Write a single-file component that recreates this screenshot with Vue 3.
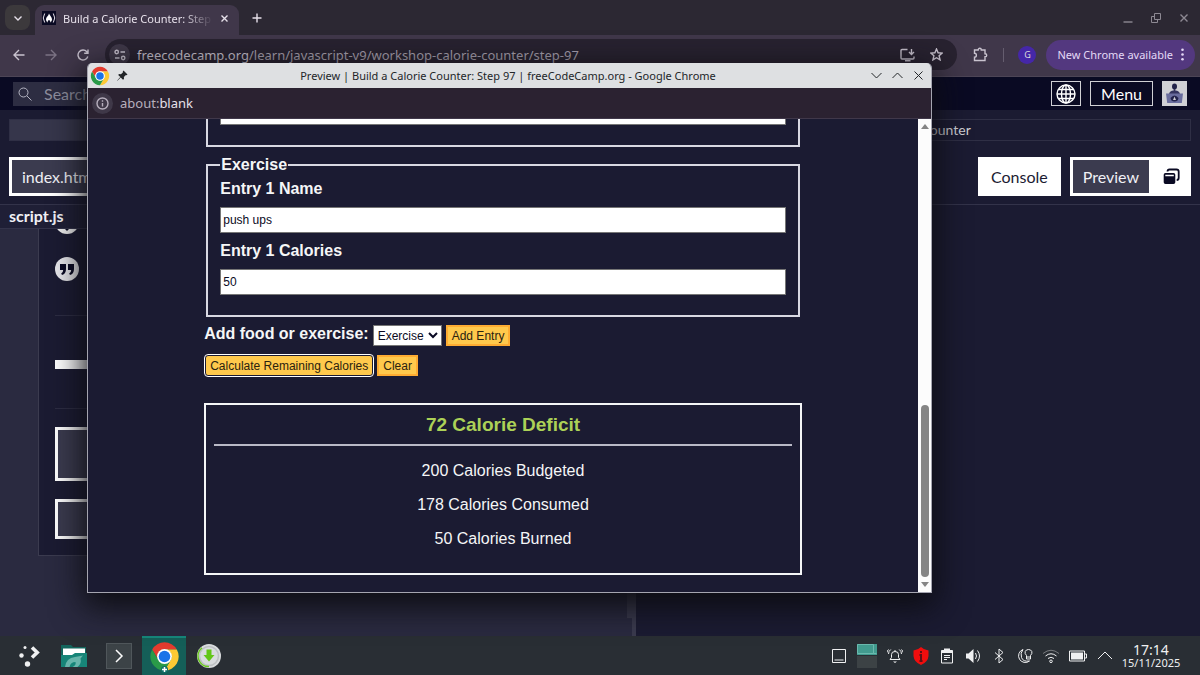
<template>
  <div class="desktop">
    <svg class="defs" aria-hidden="true">
      <symbol id="chrome-logo" viewBox="0 0 48 48">
        <path fill="#e33b2e" d="M24 13H43.05A22 22 0 0 0 4.95 13L14.47 29.5A11 11 0 0 1 24 13z" />
        <path fill="#fcc934" d="M43.05 13A22 22 0 0 1 24 46L33.53 29.5A11 11 0 0 0 24 13z" />
        <path fill="#2a9a48" d="M4.95 13A22 22 0 0 0 24 46L33.53 29.5A11 11 0 0 1 14.47 29.5z" />
        <circle cx="24" cy="24" r="11.5" fill="#fff" />
        <circle cx="24" cy="24" r="9" fill="#1a73e8" />
      </symbol>
    </svg>

    <!-- main browser window -->
    <main class="browser">
      <header class="tabstrip">
        <button class="tab-search" aria-label="Search tabs">
          <svg width="10" height="10" viewBox="0 0 10 10"><path class="line bold" d="M1.5 3.5L5 7l3.500-3.500" /></svg>
        </button>
        <div class="tab">
          <svg class="favicon" width="14" height="14" viewBox="0 0 14 14">
            <rect width="14" height="14" fill="#0a0a23" />
            <path class="line" d="M2.700 2.500Q-.2 7 2.700 11.500M11.300 2.500Q14.200 7 11.300 11.500" />
            <path fill="#fff" d="M7 2.500c.5 1.800 3 3.500 3 5.800 0 1.500-.8 2.600-2 3.200.7-1.200.2-2-1-2.600-1.200.6-1.700 1.400-1 2.600-1.200-.6-2-1.700-2-3.200C4 6 6.500 5 7 2.500z" />
          </svg>
          <span class="tab-title">Build a Calorie Counter: Step 97</span>
          <button class="plain" aria-label="Close tab">
            <svg width="9" height="9" viewBox="0 0 9 9"><path class="line bold" d="M1.500 1.500l6 6m0-6l-6 6" /></svg>
          </button>
        </div>
        <button class="plain new-tab" aria-label="New tab">
          <svg width="10" height="10" viewBox="0 0 10 10"><path class="line bold" d="M5 .5v9M.5 5h9" /></svg>
        </button>
        <div class="window-buttons">
          <button class="plain" aria-label="Minimize">
            <svg width="10" height="10" viewBox="0 0 10 10"><path class="line bold" d="M.5 9h9" /></svg>
          </button>
          <button class="plain" aria-label="Restore">
            <svg width="10" height="10" viewBox="0 0 10 10"><path class="line" d="M3.500.5h6v6h-6zM3.500 3.500h-3v6h6v-3" /></svg>
          </button>
          <button class="plain" aria-label="Close">
            <svg width="10" height="10" viewBox="0 0 10 10"><path class="line bold" d="M1.500 1.500l7 7m0-7l-7 7" /></svg>
          </button>
        </div>
      </header>

      <div class="toolbar">
        <button class="plain" aria-label="Back">
          <svg width="12" height="12" viewBox="0 0 12 12"><path class="line bold" d="M11.500 6H1M6 1L1 6l5 5" /></svg>
        </button>
        <button class="plain dim" aria-label="Forward">
          <svg width="12" height="12" viewBox="0 0 12 12"><path class="line bold" d="M.5 6H11M6 1l5 5-5 5" /></svg>
        </button>
        <button class="plain" aria-label="Reload">
          <svg width="12" height="12" viewBox="0 0 12 12"><path class="line bold" d="M10.800 7.500A5 5 0 1 1 9.800 2.700L11 4M11 .5V4.300H7.200" /></svg>
        </button>
        <div class="address">
          <span class="site-info">
            <svg width="12" height="12" viewBox="0 0 12 12"><path class="line bold" d="M6.500 3H11M1 9h4.500" /><circle class="line bold" cx="2.700" cy="3" r="1.700" /><circle class="line bold" cx="9.200" cy="9" r="1.700" /></svg>
          </span>
          <span class="url">freecodecamp.org<span>/learn/javascript-v9/workshop-calorie-counter/step-97</span></span>
          <button class="plain" aria-label="Install app">
            <svg width="15" height="14" viewBox="0 0 15 14"><path class="line bold" d="M7.500 1.500H2A1 1 0 0 0 1 2.500v7.500a1 1 0 0 0 1 1H13a1 1 0 0 0 1-1V8.500M5 12.700h5.500M11.500 1v5M9 4l2.500 2.500L14 4" /></svg>
          </button>
          <button class="plain" aria-label="Bookmark">
            <svg width="13" height="13" viewBox="0 0 13 13"><path class="line bold" d="M6.500 1l1.600 3.800 4.100.3-3.100 2.700 1 4.100-3.600-2.200-3.600 2.200 1-4.100L.8 5.100l4.100-.3z" /></svg>
          </button>
        </div>
        <button class="plain" aria-label="Extensions">
          <svg width="15" height="15" viewBox="0 0 15 15"><path class="line bold" d="M1.500 3H5.200C5.200.7 8.300.7 8.300 3H12V6.700c2.300 0 2.300 3.100 0 3.100v3.700H1.500V10.300C4 10.300 4 6.200 1.500 6.200z" /></svg>
        </button>
        <span class="divider"></span>
        <span class="profile">G</span>
        <button class="update">New Chrome available
          <svg width="3" height="13" viewBox="0 0 3 13"><circle cx="1.500" cy="1.800" r="1.300" /><circle cx="1.500" cy="6.500" r="1.300" /><circle cx="1.500" cy="11.200" r="1.300" /></svg>
        </button>
      </div>

      <nav class="site-nav">
        <label class="search">
          <svg width="14" height="14" viewBox="0 0 14 14"><circle class="line" cx="5.500" cy="5.500" r="4.500" /><path class="line" d="M9 9l4.500 4.500" /></svg>
          <input type="search" placeholder="Search" aria-label="Search tutorials">
        </label>
        <button class="nav-button" aria-label="Language">
          <svg width="20" height="20" viewBox="0 0 20 20"><g class="line bold"><circle cx="10" cy="10" r="9" /><ellipse cx="10" cy="10" rx="4.500" ry="9" /><path d="M10 1v18M1 10h18M2.500 5.500h15M2.500 14.500h15" /></g></svg>
        </button>
        <button class="nav-button menu">Menu</button>
        <a href="#" class="avatar" aria-label="Profile">
          <svg width="25" height="25" viewBox="0 0 25 25">
            <rect width="25" height="25" fill="#d0d0d5" />
            <ellipse cx="12.500" cy="5.500" rx="2.500" ry="3" fill="#22224a" />
            <path fill="#34345f" d="M11.700 8h1.600v1.500q4 .2 4.700 3.500H7q.7-3.300 4.700-3.500z" />
            <path fill="#6a6d9e" d="M4 12.500h17l-1.200 9.500H5.200z" />
            <path fill="#22224a" d="M8.500 17q4-5 8 0-.5 3.500-4 3.500T8.500 17z" />
            <path fill="#d0d0d5" d="M12.500 15.500l1.500 3.500h-3z" />
          </svg>
        </a>
      </nav>

      <div class="crumbs">
        <a href="#" class="crumb filled" aria-label="Course"></a>
        <a href="#" class="crumb">Build a Calorie Counter</a>
      </div>

      <div class="panel-tabs">
        <button class="panel-tab active">index.html</button>
        <span class="spacer"></span>
        <button class="panel-tab">Console</button>
        <div class="split">
          <button class="panel-tab active">Preview</button>
          <button class="popout" aria-label="Open preview in new window">
            <svg width="17" height="17" viewBox="0 0 17 17"><path fill="#0a0a23" fill-rule="evenodd" d="M2.500 5h8A1.800 1.800 0 0 1 12.300 6.800v7.400a1.800 1.800 0 0 1-1.800 1.800h-8A1.800 1.800 0 0 1 .7 14.200V6.800A1.800 1.800 0 0 1 2.500 5zM2.300 6.800v1.500h8.500V6.800z" /><path fill="none" stroke="#0a0a23" stroke-width="1.800" d="M4.500 3.500Q4.500 1.500 6.500 1.500h7Q15.700 1.500 15.700 3.700v6q0 2.300-2 2.300" /></svg>
          </button>
        </div>
      </div>

      <div class="workspace">
        <section class="lesson">
          <h2 class="file-name">script.js</h2>
          <div class="lesson-scroll">
            <div class="lesson-panel">
              <svg class="step-icon" width="24" height="5" viewBox="0 19 24 5"><circle cx="12" cy="12" r="12" fill="#eee" /><path fill="#0a0a23" d="M10 19h4l-2 2z" /></svg>
              <svg class="step-icon quote" width="24" height="24" viewBox="0 0 24 24"><circle cx="12" cy="12" r="12" fill="#e8e8ec" /><path fill="#0a0a23" d="M5 7h6v5q0 5-4 6l-.8-1.500q2-1 2-3.500H5zM13 7h6v5q0 5-4 6l-.8-1.500q2-1 2-3.500H13z" /></svg>
              <hr>
              <div class="progress"></div>
              <hr>
              <button class="lesson-button tall" aria-label="Check code"></button>
              <button class="lesson-button" aria-label="Reset"></button>
            </div>
            <span class="lesson-thumb"></span>
          </div>
        </section>
        <section class="preview-pane"></section>
      </div>
    </main>

    <!-- preview window on top -->
    <section class="popup">
      <header class="popup-title">
        <svg width="20" height="20"><use href="#chrome-logo" /></svg>
        <svg width="11" height="11" viewBox="0 0 11 11"><path fill="#232629" d="M6.500.5l4 4-1 .7-.6-.2-2 2 .1 2-1 .8L3.700 7.500.5 10.800l-.3-.4L3.300 7.100 1.200 5l.8-.9 2 .1 2-2-.2-.7z" /></svg>
        <h1>Preview | Build a Calorie Counter: Step 97 | freeCodeCamp.org - Google Chrome</h1>
        <button class="plain" aria-label="Minimize">
          <svg width="11" height="11" viewBox="0 0 11 11"><path class="line" d="M.5 3l5 5 5-5" /></svg>
        </button>
        <button class="plain" aria-label="Maximize">
          <svg width="11" height="11" viewBox="0 0 11 11"><path class="line" d="M.5 8l5-5 5 5" /></svg>
        </button>
        <button class="plain" aria-label="Close">
          <svg width="11" height="11" viewBox="0 0 11 11"><path class="line" d="M1.500 1.500l8 8m0-8l-8 8" /></svg>
        </button>
      </header>
      <div class="popup-address">
        <span class="site-info">
          <svg width="13" height="13" viewBox="0 0 13 13"><circle class="line bold" cx="6.500" cy="6.500" r="5.500" /><path class="line bold" d="M6.500 6v3.500M6.500 3.300v1.400" /></svg>
        </span>
        <span>about:<b>blank</b></span>
      </div>

      <div class="popup-body">
        <div class="page">
          <form class="counter" @submit.prevent>
            <fieldset>
              <input type="number" aria-label="Snacks calories">
            </fieldset>
            <fieldset>
              <legend>Exercise</legend>
              <label for="exercise-name">Entry 1 Name</label>
              <input id="exercise-name" v-model="entryName" type="text">
              <label for="exercise-calories">Entry 1 Calories</label>
              <input id="exercise-calories" v-model="entryCalories" type="text">
            </fieldset>
            <div class="controls">
              <label for="entry-dropdown">Add food or exercise:</label>
              <select id="entry-dropdown" v-model="category">
                <option>Exercise</option>
              </select>
              <button type="button">Add Entry</button>
            </div>
            <div class="controls actions">
              <button type="submit" class="focused">Calculate Remaining Calories</button>
              <button type="button">Clear</button>
            </div>
          </form>
          <div class="output">
            <h2>72 Calorie Deficit</h2>
            <p v-for="line in results" :key="line">{{ line }}</p>
          </div>
        </div>
        <div class="scrollbar">
          <svg width="8" height="5" viewBox="0 0 8 5"><path d="M4 0l4 5H0z" /></svg>
          <span class="thumb"></span>
          <svg width="8" height="5" viewBox="0 0 8 5"><path d="M0 0h8L4 5z" /></svg>
        </div>
      </div>
    </section>

    <footer class="taskbar">
      <button class="app" aria-label="Application launcher">
        <svg width="22" height="22" viewBox="0 0 22 22"><g fill="#eff0f1"><circle cx="7" cy="2.500" r="1.500" /><circle cx="3.500" cy="10.500" r="2.200" /><circle cx="9.500" cy="19" r="2.700" /></g><path fill="none" stroke="#eff0f1" stroke-width="3.600" d="M14 2.500l5.200 5-5.200 5" /></svg>
      </button>
      <button class="app" aria-label="File manager">
        <svg width="26" height="24" viewBox="0 0 26 24"><path fill="#14655c" d="M0 1h10l2 2h13v10H0z" /><path fill="#fff" d="M2 4.500h22V12H2z" /><path fill="#178578" d="M0 11h11l3-2h12v14H0z" /><path fill="#68b5ab" d="M4 23q1-9 10-10l8-1.500-2.500 3q1.500 5-3 8.500h-5q4-2 3-5-5 0-6 5z" /></svg>
      </button>
      <button class="app" aria-label="Terminal">
        <svg width="26" height="26" viewBox="0 0 26 26"><rect x=".5" y=".5" width="25" height="25" fill="#3c4347" stroke="#50575b" /><path fill="none" stroke="#fcfcfc" stroke-width="1.500" d="M10 7l6 6-6 6" /></svg>
      </button>
      <button class="app current" aria-label="Google Chrome">
        <svg width="31" height="32" viewBox="0 0 31 32"><use href="#chrome-logo" width="31" height="31" /><circle cx="15.500" cy="28.500" r="3.500" fill="#107068" /><path stroke="#fff" stroke-width="1.500" d="M15.500 26v5M13 28.500h5" /></svg>
      </button>
      <button class="app" aria-label="Downloads">
        <svg width="24" height="24" viewBox="0 0 24 24"><circle cx="12" cy="12" r="12" fill="#d9dcde" /><circle cx="12" cy="12" r="9.500" fill="none" stroke="#bcc0c2" stroke-width="1.500" /><path fill="none" stroke="#68c71b" stroke-width="1.500" d="M5 3.800A10.500 10.500 0 0 0 12 22.500" /><path fill="#62c617" d="M9.500 5.500h5v5.500h3L12 17.500 6.500 11h3z" /></svg>
      </button>

      <div class="tray">
        <svg viewBox="0 0 16 16"><path class="line" d="M1.500 1.500h13v13h-13zM3.500 12h9" /></svg>
        <svg class="pager" viewBox="0 0 20 24"><path fill="#3c4245" d="M0 12h20v12H0z" /><path fill="#429b8f" d="M0 0h20v11H0z" /><path fill="none" stroke="#6bb9ae" d="M.5.5h16v9H.5zM16.500 9.500h3" /></svg>
        <svg viewBox="0 0 16 16"><path class="line" d="M3 11.500h10l-1.500-2V6.500Q11.500 3.500 8 3.500T4.500 6.500v3zM8 2v1.500M3.800 1.500Q1.500 3 1.500 6M12.200 1.500q2.300 1.500 2.300 4.500M1.500 1.500Q0 3 0 4.500M14.500 1.500Q16 3 16 4.500" /><path fill="#eff0f1" d="M6 13.500h4l-2 1.500z" /></svg>
        <svg class="shield" viewBox="0 0 16 18"><path fill="#f00d0d" d="M8 0q3 3 7.500 3.500V9Q15 15 8 18 1 15 .5 9V3.500Q5 3 8 0z" /><path fill="none" stroke="#601015" stroke-width="2" d="M8 4v2M6.500 8H8v6M6.500 14h3" /></svg>
        <svg viewBox="0 0 16 16"><path class="line" d="M2.500 2.500h11v12.500h-11zM5 7.500h6M5 9.500h6M5 11.500h3" /><path fill="#eff0f1" d="M5 .5h6v2h2.500V5h-11V2.500H5z" /></svg>
        <svg viewBox="0 0 16 16"><path fill="#eff0f1" d="M1 5.500h2.500L8.500 1v14l-5-4.500H1z" /><path class="line" d="M10.500 5q2 3 0 6M12.500 2.500q4 5.500 0 11" /></svg>
        <svg viewBox="0 0 16 16"><path class="line" d="M4 4.500l8 7-4 3.500V1l4 3.500-8 7" /></svg>
        <svg viewBox="0 0 16 16"><path class="line" d="M6 1.500A6.700 6.700 0 1 0 12.500 13Q6 14 4.500 9.500T6 1.500zM9.500 7.500Q7.500 5.500 8.200 3.500 9 1.500 11.500 1.500T14.800 3.500Q15.500 5.500 13.500 7.500V11h-4zM9.500 9h4" /></svg>
        <svg viewBox="0 0 16 16"><path class="line faded" d="M0 5.500q8-6.500 16 0" /><path class="line" d="M2.500 8q5.500-4.500 11 0M5 10.500q3-2.500 6 0" /><circle class="line" cx="8" cy="13.300" r="1.300" /></svg>
        <svg class="battery" viewBox="0 0 18 16"><path class="line" d="M.5 3h15v10H.5zM16 6h1.500v4H16" /><path fill="#eff0f1" d="M2 4.500h12v7H2z" /></svg>
        <svg viewBox="0 0 16 16"><path class="line" d="M1 11l7-7 7 7" /></svg>
      </div>
      <div class="clock">
        <time class="time">17:14</time>
        <time class="date">15/11/2025</time>
      </div>
    </footer>
  </div>
</template>

<script setup>
import { ref } from 'vue'

const entryName = ref('push ups')
const entryCalories = ref('50')
const category = ref('Exercise')

const results = [
  '200 Calories Budgeted',
  '178 Calories Consumed',
  '50 Calories Burned'
]
</script>

<style>
body { background: #1b1b32; }
</style>

<style scoped>
* { box-sizing: border-box; }
.desktop {
  position: relative;
  display: flex;
  flex-direction: column;
  height: 100vh;
  overflow: hidden;
  font-family: "Noto Sans", sans-serif;
  color: #e6e0ea;
}
.defs { position: absolute; width: 0; height: 0; }
svg { display: block; flex: none; }
button { font: inherit; color: inherit; margin: 0; }
.line { fill: none; stroke: currentColor; stroke-width: 1; }
.bold { stroke-width: 1.4; }
.plain { display: flex; padding: 0; border: 0; background: none; }
.spacer { flex: 1; }

/* browser chrome */
.browser { flex: 1; display: flex; flex-direction: column; min-height: 0; }
.tabstrip { display: flex; align-items: center; height: 35px; padding-left: 5px; background: #2c2833; }
.tab-search {
  display: flex; align-items: center; justify-content: center;
  width: 25px; height: 25px; padding: 0; border: 0; border-radius: 8px; background: #3c393c;
}
.tab {
  display: flex; align-items: center; gap: 7px;
  align-self: flex-end; width: 204px; height: 30px;
  margin-left: 5px; padding: 0 10px 4px 7px;
  background: #40374a; border-radius: 9px 9px 0 0;
}
.tab-title {
  flex: 1; overflow: hidden; white-space: nowrap; font-size: 11px;
  mask-image: linear-gradient(to right, #000 80%, transparent);
}
.new-tab { margin-left: 13px; }
.window-buttons { display: flex; gap: 18px; margin-left: auto; padding-right: 11px; color: #8d8993; }
.toolbar {
  display: flex; align-items: center; gap: 20px;
  height: 42px; padding: 0 5px 2px 13px;
  background: #40374a; border-bottom: 1px solid #4d4556; color: #c9c3cf;
}
.dim { color: #7b7384; }
.address {
  flex: 1; display: flex; align-items: center; gap: 15px;
  height: 31px; margin: 0 -4px; padding: 0 14px 0 4px; border-radius: 16px; background: #282230;
}
.site-info {
  display: flex; align-items: center; justify-content: center;
  width: 21px; height: 21px; border-radius: 50%; background: #3f3848;
}
.address .site-info { margin-right: -8px; }
.url { flex: 1; font-size: 13px; white-space: nowrap; }
.url span { color: #aaa3b1; }
.divider { width: 1px; height: 14px; margin: 0 -6px 0 -5px; background: #655d6f; }
.profile {
  width: 18px; height: 18px; border-radius: 50%; background: #4527a8;
  font-size: 9px; line-height: 18px; text-align: center; color: #ddd;
}
.update {
  display: flex; align-items: center; gap: 8px;
  height: 30px; margin-left: -10px; padding: 0 11px; border: 0; border-radius: 15px;
  background: #53387f; font-size: 11px; color: #e4d8f6;
}
.update svg { fill: #e4d8f6; }

/* course page */
.site-nav {
  display: flex; align-items: center; gap: 9px; height: 33px; padding: 0 13px;
  background: #0a0a23; font-family: Lato, sans-serif;
}
.search {
  display: flex; align-items: center; gap: 12px; width: 320px; height: 24px;
  margin-right: auto; padding: 0 5px; background: #2d2d42; color: #b5b5c3;
}
.search input { flex: 1; min-width: 0; padding: 0; border: 0; background: none; font: 16px Lato, sans-serif; }
.search input::placeholder { color: #8e8e9d; }
.nav-button {
  display: flex; align-items: center; justify-content: center;
  height: 25px; padding: 0 4px; border: 1px solid #d0d0d5; background: none; color: #fff;
}
.menu { padding: 0 10px; font-size: 16px; }
.crumbs {
  display: flex; padding: 9px 9px 0; background: #1b1b32; font-family: Lato, sans-serif;
}
.crumb {
  flex: 1; height: 22px; border: 1px solid #2f2f45;
  font-size: 14px; line-height: 20px; text-align: center; text-decoration: none; color: #d0d0d5;
}
.crumb.filled { padding-left: 16px; background: #36364b; }
.panel-tabs {
  display: flex; gap: 9px; padding: 16px 9px 8px;
  background: #1b1b32; font-family: Lato, sans-serif;
}
.panel-tab { height: 39px; padding: 0 10px; border: 3px solid #fff; background: #fff; font-size: 16px; color: #1b1b32; }
.panel-tab.active { background: #3b3b4f; color: #f0f0f5; }
.split { display: flex; }
.popout { display: flex; align-items: center; padding: 0 11px; border: 0; background: #fff; }
.workspace { flex: 1; display: flex; min-height: 0; border-top: 1px solid #33334a; }
.lesson { width: 53%; display: flex; flex-direction: column; border-right: 4px solid #3b3b4f; background: #2a2a40; }
.file-name {
  margin: 0; padding: 0 0 2px 9px; background: #1f1f36; border-bottom: 1px solid #33334a;
  font: bold 16px/21px Lato, sans-serif; color: #f0f0f5;
}
.lesson-scroll { flex: 1; display: flex; align-items: flex-start; }
.lesson-panel {
  flex: 1; display: flex; flex-direction: column;
  margin: 0 16px 0 38px; padding: 0 16px 16px;
  border: 1px solid #3b3b4f; border-top: 0; background: #1b1b32;
}
.quote { margin-top: 23px; }
.lesson-panel hr { width: 100%; margin: 34px 0 44px; border: 0; border-top: 1px solid #2d2d43; }
.progress { height: 9px; background: #fff; }
.progress + hr { margin: 39px 0 18px; }
.lesson-button { height: 40px; border: 3px solid #fff; background: #3b3b4f; }
.lesson-button.tall { height: 54px; margin-bottom: 18px; }
.lesson-thumb { width: 5px; height: 389px; background: #3b3b4f; }
.preview-pane { flex: 1; background: #1b1b32; }

/* preview window */
.popup {
  position: absolute; inset: 63px 268px 82px 87px;
  display: flex; flex-direction: column; overflow: hidden;
  border: 1px solid #a5a5b0; border-top: 0; border-radius: 5px 5px 0 0;
  background: #1b1b32; box-shadow: 0 10px 32px 4px #0d0d12;
}
.popup-title {
  display: flex; align-items: center; gap: 7px; height: 25px; padding: 0 7px 0 2px;
  background: #dee0e2; color: #232629;
}
.popup-title h1 {
  flex: 1; margin: 0; padding-left: 20px;
  font-size: 11px; font-weight: 400; text-align: center; white-space: nowrap;
}
.popup-title .plain { margin-left: 3px; }
.popup-address {
  display: flex; align-items: center; gap: 7px; height: 31px; padding: 0 4px;
  background: #2b2231; border-bottom: 1px solid #40384a; font-size: 13px; color: #b7afbd;
}
.popup-address b { font-weight: 400; color: #e6e0ea; }
.popup-body { flex: 1; display: flex; min-height: 0; }
.page {
  flex: 1; display: flex; flex-direction: column; align-items: center; justify-content: flex-end;
  padding-bottom: 17px; overflow: hidden;
  font-family: "Liberation Sans", Arial, sans-serif; font-size: 16px; line-height: 20px; color: #f5f6f7;
}
.counter, .output { width: 72%; }
fieldset { margin: 0 2px 8px; padding: 0 12px 20px; border: 2px solid #d8d8e2; }
legend { padding: 0 1px; font-weight: bold; }
label { font-weight: bold; }
fieldset label { display: block; padding-top: 4px; }
fieldset input {
  display: block; width: 100%; height: 26px; margin-top: 8px; padding: 1px 2px;
  border: 1px solid #767676; background: #fff;
  font: 12px "Liberation Sans", Arial, sans-serif; color: #0a0a23;
}
input + label { margin-top: 4px; }
.controls { display: flex; gap: 4px; margin-top: 8px; }
.controls label { line-height: 18px; }
.actions { margin: 9px 0 27px 1px; }
.controls select {
  height: 21px; border: 1px solid #767676; background: #fff;
  font: 12px "Liberation Sans", Arial, sans-serif; color: #0a0a23;
}
.controls button {
  height: 21px; padding: 0 4px; border: 2px solid #feac32; background: #ffc94c;
  font-size: 12px; line-height: 16px; color: #2a2210;
}
.controls .focused { border-color: #1b1b32; border-width: 1px; border-radius: 3px; outline: 1px solid #fff; }
.output { padding: 7px 8px 24px; border: 2px solid #f5f6f7; text-align: center; }
.output h2 {
  margin: 0 0 15px; padding-bottom: 6px; border-bottom: 2px solid #b9b9c6;
  font-size: 19px; line-height: 26px; color: #acd157;
}
.output p { margin: 0; }
.output p + p { margin-top: 14px; }
.scrollbar {
  display: flex; flex-direction: column; align-items: center; justify-content: space-between;
  width: 13px; padding: 5px 0; background: #fcfcfc; fill: #858585;
}
.thumb { width: 8px; height: 172px; margin: auto 0 5px; border-radius: 4px; background: #858585; }

/* taskbar */
.taskbar { display: flex; align-items: center; height: 39px; padding: 0 11px 0 7px; background: #292e34; color: #eff0f1; }
.app {
  display: flex; align-items: center; justify-content: center;
  width: 44px; height: 39px; margin-right: 1px; padding: 0; border: 0; background: none;
}
.current { background: #155f58; border-top: 2px solid #16877b; }
.tray { display: flex; align-items: center; gap: 10px; margin-left: auto; }
.tray svg { width: 16px; height: 16px; }
.tray .pager { width: 20px; height: 24px; }
.tray .shield { height: 18px; }
.tray .battery { width: 18px; }
.faded { opacity: .4; }
.clock { display: flex; flex-direction: column; align-items: center; width: 76px; }
.time { font-size: 14px; line-height: 15px; }
.date { font-size: 11px; line-height: 12px; }
</style>
